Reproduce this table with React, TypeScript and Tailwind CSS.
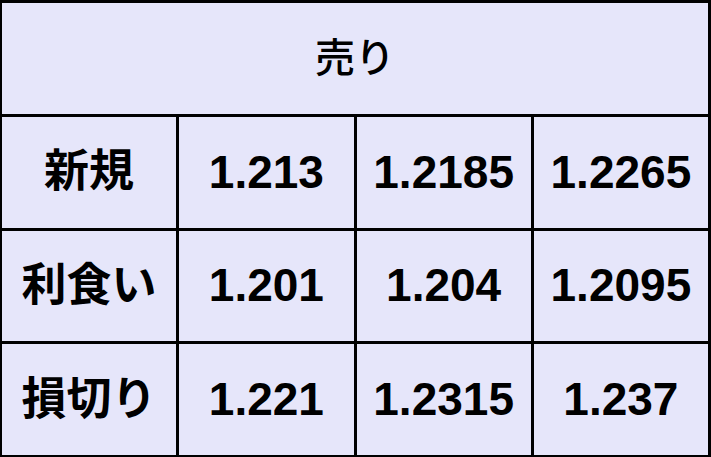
const ROWS: { label: string; values: string[] }[] = [
  { label: '新規', values: ['1.213', '1.2185', '1.2265'] },
  { label: '利食い', values: ['1.201', '1.204', '1.2095'] },
  { label: '損切り', values: ['1.221', '1.2315', '1.237'] },
];

const cell = 'flex items-center justify-center bg-[#e6e6fa] text-black';

export default function App() {
  return (
    <div
      className="grid h-[457px] w-[711px] grid-cols-4 grid-rows-4 gap-[3px] bg-black pt-[3px] pb-[2px] pl-[2px] pr-[3px]"
      style={{ fontFamily: '"Liberation Sans", "Noto Sans CJK JP", sans-serif' }}
    >
      {/* Header */}
      <div className={`${cell} col-span-4 text-[40px] font-medium`}>売り</div>

      {ROWS.map((row) => (
        <div key={row.label} className="contents">
          <div className={`${cell} text-[45px] font-bold`}>{row.label}</div>
          {row.values.map((v, i) => (
            <div key={i} className={`${cell} text-[46px] font-bold`}>
              {v}
            </div>
          ))}
        </div>
      ))}
    </div>
  );
}
